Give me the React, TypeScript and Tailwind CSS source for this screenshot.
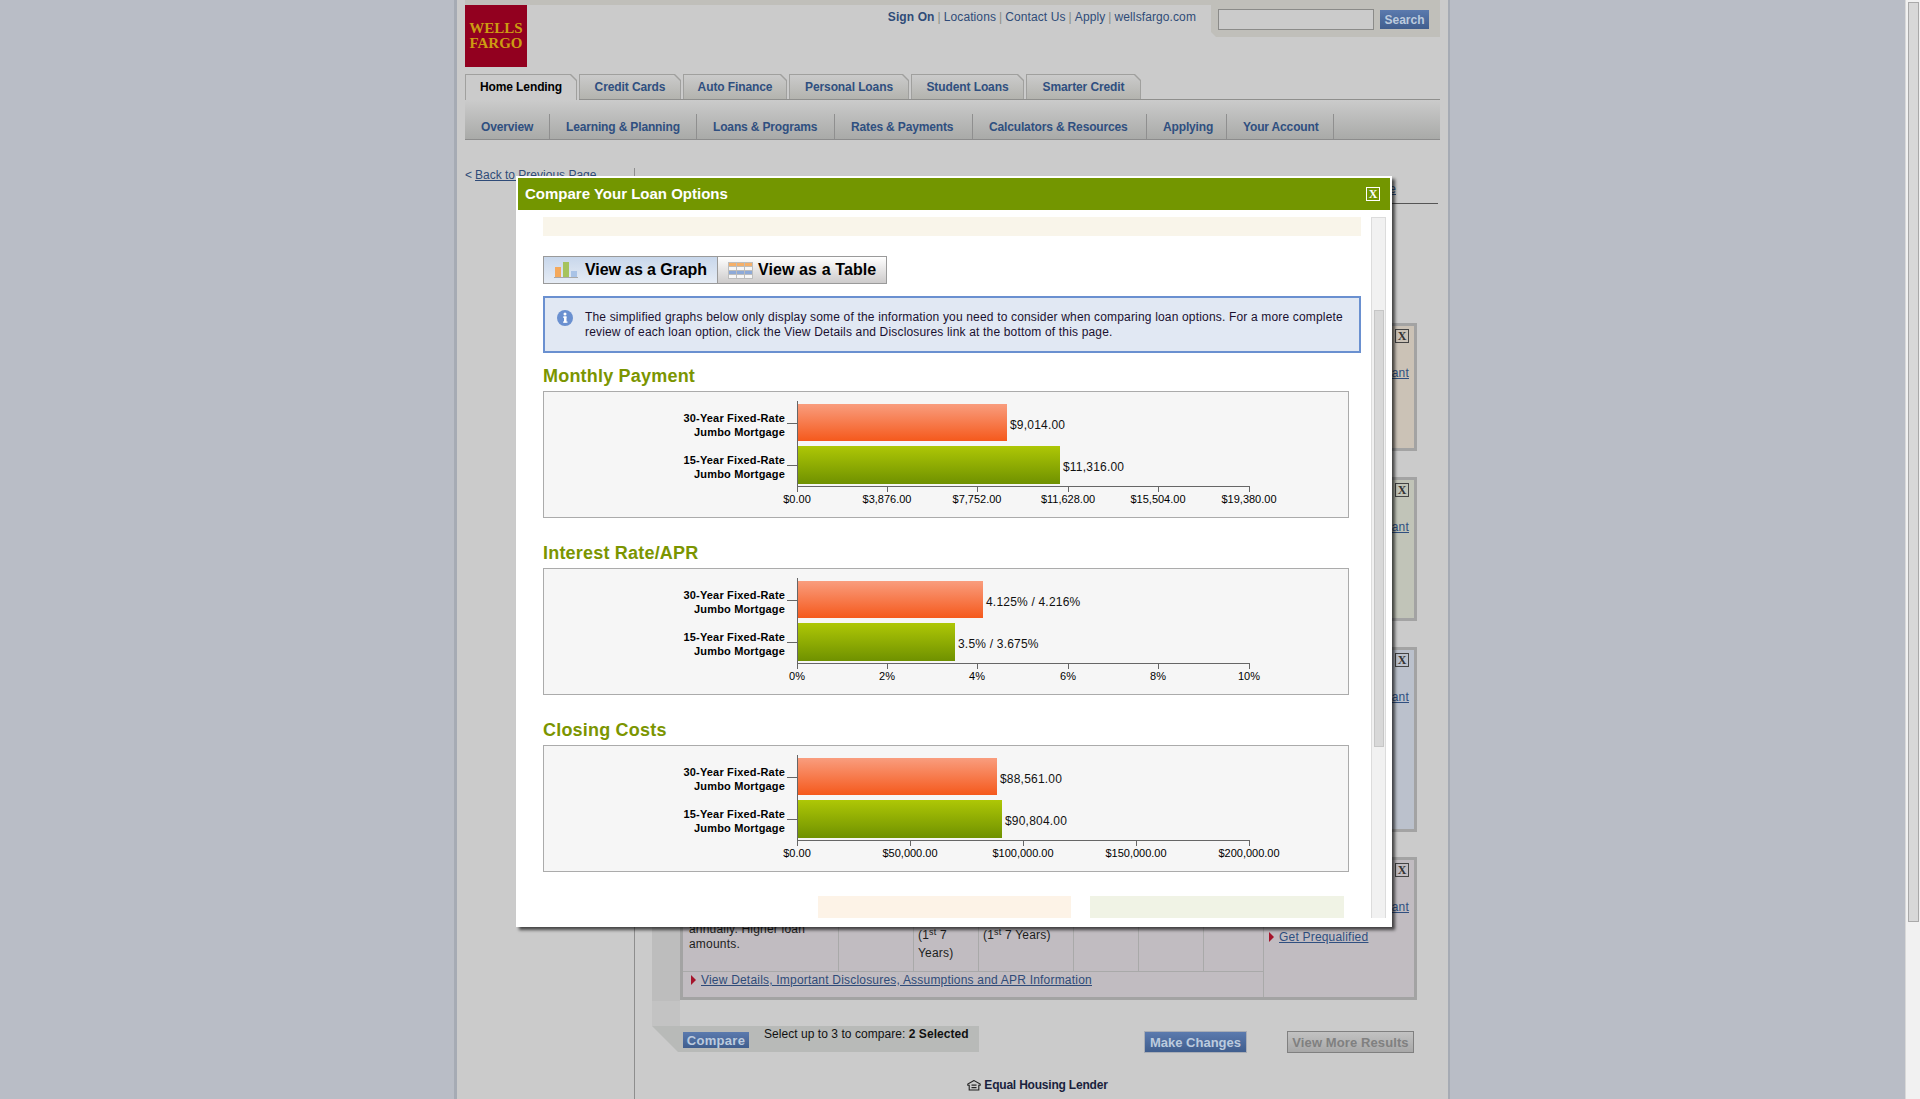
const topLinks = ["Locations", "Contact Us", "Apply", "wellsfargo.com"];

const tabs = [
  { label: "Credit Cards", width: "w-[102px]" },
  { label: "Auto Finance", width: "w-[104px]" },
  { label: "Personal Loans", width: "w-[120px]" },
  { label: "Student Loans", width: "w-[113px]" },
  { label: "Smarter Credit", width: "w-[115px]" },
];

const subNav = [
  { label: "Overview", width: "w-[85px]" },
  { label: "Learning & Planning", width: "w-[147px]" },
  { label: "Loans & Programs", width: "w-[138px]" },
  { label: "Rates & Payments", width: "w-[138px]" },
  { label: "Calculators & Resources", width: "w-[174px]" },
  { label: "Applying", width: "w-[80px]" },
  { label: "Your Account", width: "w-[107px]" },
];

const charts = [
  {
    title: "Monthly Payment",
    top: "mt-[8px]",
    bars: [
      { end: 1007, value: "$9,014.00" },
      { end: 1060, value: "$11,316.00" },
    ],
    ticks: [
      [797, "$0.00"],
      [887, "$3,876.00"],
      [977, "$7,752.00"],
      [1068, "$11,628.00"],
      [1158, "$15,504.00"],
      [1249, "$19,380.00"],
    ],
  },
  {
    title: "Interest Rate/APR",
    top: "mt-[20px]",
    bars: [
      { end: 983, value: "4.125% / 4.216%" },
      { end: 955, value: "3.5% / 3.675%" },
    ],
    ticks: [
      [797, "0%"],
      [887, "2%"],
      [977, "4%"],
      [1068, "6%"],
      [1158, "8%"],
      [1249, "10%"],
    ],
  },
  {
    title: "Closing Costs",
    top: "mt-[20px]",
    bars: [
      { end: 997, value: "$88,561.00" },
      { end: 1002, value: "$90,804.00" },
    ],
    ticks: [
      [797, "$0.00"],
      [910, "$50,000.00"],
      [1023, "$100,000.00"],
      [1136, "$150,000.00"],
      [1249, "$200,000.00"],
    ],
  },
] as const;

// the chart svg starts 544px from the page edge
const ORIGIN = 544;

function Chart({ id, bars, ticks }: { id: number; bars: (typeof charts)[number]["bars"]; ticks: (typeof charts)[number]["ticks"] }) {
  return (
    <div className="h-[127px] w-[806px] border border-[#ababab] bg-[#f6f6f6]">
      <svg width="804" height="125" className="block">
        <defs>
          <linearGradient id={`orange-${id}`} x1="0" y1="0" x2="0" y2="1">
            <stop offset="0" stopColor="#f99d7e" />
            <stop offset="1" stopColor="#f5591c" />
          </linearGradient>
          <linearGradient id={`green-${id}`} x1="0" y1="0" x2="0" y2="1">
            <stop offset="0" stopColor="#aec706" />
            <stop offset="1" stopColor="#6f9100" />
          </linearGradient>
        </defs>
        <rect x="254" y="12" width={bars[0].end - 798} height="37" fill={`url(#orange-${id})`} />
        <rect x="254" y="54" width={bars[1].end - 798} height="38" fill={`url(#green-${id})`} />
        <g stroke="#666" strokeWidth="1">
          <line x1="253.5" y1="9" x2="253.5" y2="100" />
          <line x1="253" y1="94.5" x2="706" y2="94.5" />
          <line x1="243" y1="31.5" x2="253" y2="31.5" />
          <line x1="243" y1="73.5" x2="253" y2="73.5" />
          {ticks.map(([x]) => (
            <line key={x} x1={x - ORIGIN + 0.5} y1="94" x2={x - ORIGIN + 0.5} y2="100" />
          ))}
        </g>
        <g className="fill-black text-[11px] font-bold tracking-[0.17px]" textAnchor="end">
          <text x="241" y="30">30-Year Fixed-Rate</text>
          <text x="241" y="44">Jumbo Mortgage</text>
          <text x="241" y="72">15-Year Fixed-Rate</text>
          <text x="241" y="86">Jumbo Mortgage</text>
        </g>
        <g className="fill-[#111] text-[12px] tracking-[0.2px]">
          <text x={bars[0].end - ORIGIN + 3} y="37">{bars[0].value}</text>
          <text x={bars[1].end - ORIGIN + 3} y="79">{bars[1].value}</text>
        </g>
        <g className="fill-black text-[11px]" textAnchor="middle">
          {ticks.map(([x, label]) => (
            <text key={x} x={x - ORIGIN} y="111">{label}</text>
          ))}
        </g>
      </svg>
    </div>
  );
}

function RedArrow() {
  return (
    <svg width="5" height="10" viewBox="0 0 5 10" className="shrink-0">
      <polygon points="0,0 5,5 0,10" fill="#a5142b" />
    </svg>
  );
}

function ResultCard({ className, children }: { className: string; children?: React.ReactNode }) {
  return (
    <div className={`flex w-[737px] border-[3px] border-[#a3a3a3] ${className}`}>
      <div className="w-[580px] shrink-0">{children}</div>
      <div className="flex w-[151px] flex-col border-l border-[#a9a9a9]">
        <div className="mt-[3px] mr-[5px] flex h-[14px] w-[14px] items-center justify-center self-end border border-[#444] font-['Liberation_Serif',serif] text-[12px] leading-none font-bold text-[#333]">
          X
        </div>
        <a className="mt-[23px] mr-[5px] self-end text-[12px] leading-[14px] tracking-[0.2px] text-[#2f4f80] underline">Find a Consultant</a>
        <div className="mt-[16px] flex items-center gap-[5px] pl-[5px] text-[12px] leading-[14px] tracking-[0.2px] text-[#2f4f80] underline">
          <RedArrow />
          <a>Get Prequalified</a>
        </div>
      </div>
    </div>
  );
}

function GraphIcon() {
  return (
    <svg width="25" height="18" viewBox="0 0 25 18" className="shrink-0">
      <rect x="1" y="6" width="6" height="10" fill="#f4a95c" />
      <rect x="9" y="1" width="6" height="15" fill="#a6c35c" />
      <rect x="17" y="10" width="6" height="6" fill="#a9c3e6" />
      <rect x="0" y="16" width="24" height="1" fill="#a9a9a9" />
    </svg>
  );
}

function TableIcon() {
  return (
    <svg width="25" height="17" viewBox="0 0 25 17" className="shrink-0">
      <rect width="25" height="17" fill="#bdbdbd" />
      <rect x="1" y="1" width="7" height="3" fill="#f4b06a" />
      <rect x="9" y="1" width="7" height="3" fill="#f4b06a" />
      <rect x="17" y="1" width="7" height="3" fill="#f4b06a" />
      <rect x="1" y="5" width="7" height="3" fill="#f7f7f7" />
      <rect x="9" y="5" width="7" height="3" fill="#f7f7f7" />
      <rect x="17" y="5" width="7" height="3" fill="#f7f7f7" />
      <rect x="1" y="9" width="7" height="3" fill="#8eaad8" />
      <rect x="9" y="9" width="7" height="3" fill="#8eaad8" />
      <rect x="17" y="9" width="7" height="3" fill="#8eaad8" />
      <rect x="1" y="13" width="7" height="3" fill="#f7f7f7" />
      <rect x="9" y="13" width="7" height="3" fill="#f7f7f7" />
      <rect x="17" y="13" width="7" height="3" fill="#f7f7f7" />
    </svg>
  );
}

function CompareDialog() {
  return (
    <div className="absolute top-[176px] left-[516px] h-[751px] w-[876px] border-2 border-white bg-white shadow-[3px_3px_3px_rgba(0,0,0,0.65)]">
      <div className="flex h-[32px] items-center justify-between bg-[#739600] pr-[10px] pl-[7px]">
        <h2 className="text-[15px] font-bold text-white">Compare Your Loan Options</h2>
        <div className="flex h-[14px] w-[14px] items-center justify-center border border-white font-['Liberation_Serif',serif] text-[12px] leading-none font-bold text-white">
          X
        </div>
      </div>
      <div className="flex pt-[7px] pl-[25px]">
        <div className="w-[818px] shrink-0">
          <div className="h-[19px] bg-[#f9f5ea]" />

          <div className="mt-[20px] flex h-[28px] w-[344px] border border-[#9a9a9a] text-[16px] font-bold text-black">
            <div className="flex w-[174px] items-center gap-[6px] border-r border-[#9a9a9a] bg-gradient-to-b from-[#c8d7eb] to-[#e6ecf5] pl-[10px]">
              <GraphIcon />
              <span className="tracking-[-0.1px]">View as a Graph</span>
            </div>
            <div className="flex flex-1 items-center gap-[5px] bg-gradient-to-b from-white to-[#cdcbcb] pl-[10px]">
              <TableIcon />
              <span className="tracking-[0.1px]">View as a Table</span>
            </div>
          </div>

          <div className="mt-[12px] flex h-[57px] gap-[12px] border-2 border-[#6a90d0] bg-[#e1e8f3] pt-[12px] pl-[12px] text-[12px] leading-[15px] text-[#1a1030]">
            <svg width="16" height="16" viewBox="0 0 16 16" className="shrink-0">
              <circle cx="8" cy="8" r="8" fill="#6a90d0" />
              <circle cx="8" cy="4" r="1.5" fill="#fff" />
              <rect x="6" y="6.5" width="3.5" height="1.2" fill="#fff" />
              <rect x="7" y="6.5" width="2.5" height="6" fill="#fff" />
              <rect x="6" y="11.5" width="4.5" height="1.2" fill="#fff" />
            </svg>
            <p className="tracking-[0.17px]">
              The simplified graphs below only display some of the information you need to consider when comparing loan options. For a more complete
              <br />
              review of each loan option, click the View Details and Disclosures link at the bottom of this page.
            </p>
          </div>

          {charts.map((chart, i) => (
            <section key={chart.title} className={chart.top}>
              <h3 className="h-[30px] text-[18px] leading-[30px] font-bold tracking-[0.2px] text-[#7b9500]">{chart.title}</h3>
              <Chart id={i} bars={chart.bars} ticks={chart.ticks} />
            </section>
          ))}

          <div className="mt-[24px] flex">
            <div className="ml-[275px] h-[22px] w-[253px] bg-[#fdf3e7]" />
            <div className="ml-[19px] h-[22px] w-[254px] bg-[#f0f3e5]" />
          </div>
        </div>

        <div className="ml-[10px] h-[701px] w-[15px] border-x border-t border-[#dcdcdc] bg-[#f1f1f1] pt-[92px] pl-[2px]">
          <div className="h-[437px] w-[10px] border border-[#c6c6c6] bg-[#d8d8d8]" />
        </div>
      </div>
    </div>
  );
}

export default function App() {
  return (
    <div className="relative flex h-[1099px] overflow-hidden bg-[#b9bdc6] font-['Liberation_Sans',Arial,sans-serif]">
      <div className="min-w-0 flex-1">
        <div className="ml-[454px] flex h-full w-[996px] flex-col border-r-[2px] border-l-[3px] border-l-[#a6abb4] border-r-[#a6abb4] bg-[#cbcbcb] px-[8px]">
          <header className="flex h-[74px] shrink-0">
            <div className="flex-1">
              <div className="h-[5px] bg-[#c0bfba]" />
              <div className="flex justify-between">
                <div className="flex h-[62px] w-[62px] flex-col items-center justify-center bg-[#92001f] font-['Liberation_Serif',serif] text-[15px] leading-[15px] font-bold text-[#cc9c12]">
                  <span>WELLS</span>
                  <span>FARGO</span>
                </div>
                <div className="mt-[5px] pr-[15px] text-[12px] leading-[14px] tracking-[0.1px] text-[#2f4b78]">
                  <a className="font-bold">Sign On</a>
                  {topLinks.map((link) => (
                    <span key={link}>
                      <span className="mx-[3px] text-[#8a8f85]">|</span>
                      <a>{link}</a>
                    </span>
                  ))}
                </div>
              </div>
            </div>
            <div className="flex h-[37px] w-[229px] items-start bg-[#c0bfba] pt-[9px] pl-[7px] [clip-path:polygon(0_0,100%_0,100%_100%,5px_100%,0_32px)]">
              <input className="h-[21px] w-[156px] border border-[#8b8b89] bg-[#cbcbcb]" />
              <button className="mt-[1px] ml-[6px] h-[19px] w-[49px] bg-gradient-to-b from-[#5b7aae] to-[#405e8e] text-[12px] leading-none font-bold text-[#bccbde]">
                Search
              </button>
            </div>
          </header>

          <nav className="flex h-[26px] shrink-0 gap-[2px] text-[12px] font-bold tracking-[-0.1px]">
            <div className="h-[26px] w-[112px] bg-[#a0a09e] [clip-path:polygon(0_0,calc(100%-6px)_0,100%_6px,100%_100%,0_100%)]">
              <div className="mt-[1px] ml-[1px] flex h-[25px] w-[110px] items-center justify-center bg-[#cbcbcb] pb-[1px] text-black [clip-path:polygon(0_0,calc(100%-6px)_0,100%_6px,100%_100%,0_100%)]">
                Home Lending
              </div>
            </div>
            <div className="flex flex-1 gap-[2px] border-b border-[#8f8f8d]">
              {tabs.map((tab) => (
                <div key={tab.label} className={`h-[25px] bg-[#a0a09e] [clip-path:polygon(0_0,calc(100%-6px)_0,100%_6px,100%_100%,0_100%)] ${tab.width}`}>
                  <div className="m-[1px] mb-0 flex h-[24px] items-center justify-center bg-gradient-to-b from-[#cbcbcb] to-[#b3b3ae] text-[#2f4f80] [clip-path:polygon(0_0,calc(100%-6px)_0,100%_6px,100%_100%,0_100%)]">
                    {tab.label}
                  </div>
                </div>
              ))}
            </div>
          </nav>

          <div className="flex h-[40px] shrink-0 items-end border-b border-[#8c8c8c] bg-gradient-to-b from-[#cbcbcb] to-[#a9aaa8] text-[12px] font-bold tracking-[-0.15px] text-[#2f4f80]">
            {subNav.map((item) => (
              <div key={item.label} className={`flex h-[25px] items-center border-r border-[#8f8f8f] pt-[1px] pl-[16px] ${item.width}`}>
                {item.label}
              </div>
            ))}
          </div>

          <div className="flex min-h-0 flex-1">
            <div className="w-[169px] shrink-0 pt-[28px] text-[12px] leading-[14px] text-[#2f4b78]">
              <span className="mr-[3px]">&lt;</span>
              <a className="underline">Back to Previous Page</a>
            </div>
            <div className="mt-[28px] flex-1 border-l border-[#8e8e8e]">
              <div className="mr-[2px] flex h-[36px] justify-end border-b border-[#555] pt-[14px] pr-[42px] text-[12px] leading-[14px] text-[#2f4f80]">
                <a className="underline">Print this page</a>
              </div>

              <div className="mt-[119px] ml-[17px] flex">
                <div className="w-[28px] bg-[#bdbdbd]" />
                <div className="flex flex-col gap-[26px] pb-[1px]">
                  <ResultCard className="h-[128px] bg-[#cbc2b6]" />
                  <ResultCard className="h-[144px] bg-[#c1c4b8]" />
                  <ResultCard className="h-[185px] bg-[#bbc1cc]" />
                  <ResultCard className="-mt-[1px] h-[143px] bg-[#c1bcc1]">
                    <div className="flex h-[112px] border-b border-[#a9a9a9] text-[12px] leading-[15px] tracking-[0.2px] text-[#1c1c1c]">
                      <div className="w-[156px] border-r border-[#a9a9a9] pt-[62px] pl-[6px]">
                        annually. Higher loan
                        <br />
                        amounts.
                      </div>
                      <div className="w-[75px] border-r border-[#a9a9a9]" />
                      <div className="w-[65px] border-r border-[#a9a9a9] pt-[66px] pl-[4px] leading-[18px]">
                        (1<sup className="text-[9px]">st</sup> 7 Years)
                      </div>
                      <div className="w-[95px] border-r border-[#a9a9a9] pt-[66px] pl-[4px] leading-[18px]">
                        (1<sup className="text-[9px]">st</sup> 7 Years)
                      </div>
                      <div className="w-[65px] border-r border-[#a9a9a9]" />
                      <div className="w-[65px] border-r border-[#a9a9a9]" />
                    </div>
                    <div className="flex items-center gap-[5px] pt-[1px] pl-[8px] text-[12px] leading-[14px] tracking-[0.2px] text-[#2f4b78] underline">
                      <RedArrow />
                      <a>View Details, Important Disclosures, Assumptions and APR Information</a>
                    </div>
                  </ResultCard>
                </div>
              </div>

              <div className="ml-[17px] h-[25px] w-[28px] bg-[#c3c3c3]" />

              <div className="ml-[17px] flex h-[27px] items-start">
                <div className="flex h-[26px] w-[327px] items-start bg-[#b8bab8] pl-[31px] text-[12px] [clip-path:polygon(0_0,100%_0,100%_100%,26px_100%,0_0)]">
                  <button className="mt-[6px] h-[16px] w-[66px] bg-gradient-to-b from-[#5b7aae] to-[#405e8e] text-[13px] leading-none font-bold tracking-[0.3px] text-[#bccbde]">
                    Compare
                  </button>
                  <p className="mt-[1px] ml-[15px] leading-[14px] tracking-[0.05px] text-[#111]">
                    Select up to 3 to compare: <span className="font-bold">2 Selected</span>
                  </p>
                </div>
                <button className="mt-[5px] ml-[165px] h-[22px] w-[103px] border border-[#a9adb5] bg-gradient-to-b from-[#5b7aae] to-[#405e8e] text-[13px] leading-none font-bold text-[#bccbde]">
                  Make Changes
                </button>
                <button className="mt-[5px] ml-[40px] h-[22px] w-[127px] border border-[#808080] bg-gradient-to-b from-[#c2c2c2] to-[#a8a8a8] text-[13px] leading-none font-bold tracking-[0.1px] text-[#808080]">
                  View More Results
                </button>
              </div>

              <div className="mt-[25px] flex h-[14px] items-center justify-center gap-[3px] text-[12px] font-bold tracking-[-0.2px] text-[#1a1f3d]">
                <svg width="14" height="11" viewBox="0 0 14 11">
                  <path d="M7 .6 .8 4v1.2h1.4V10h9.6V5.2h1.4V4z" fill="none" stroke="#222" strokeWidth="1.1" />
                  <rect x="4.5" y="4.5" width="5" height="1.2" fill="#222" />
                  <rect x="4.5" y="7" width="5" height="1.2" fill="#222" />
                </svg>
                <span>Equal Housing Lender</span>
              </div>
            </div>
          </div>
        </div>
      </div>

      <div className="h-full w-[15px] shrink-0 border-l border-[#d9d9d9] bg-[#f1f1f1] pt-[2px] pl-[2px]">
        <div className="h-[920px] w-[11px] border border-[#a9a9a9] bg-[#d8d8d8]" />
      </div>

      <CompareDialog />
    </div>
  );
}
